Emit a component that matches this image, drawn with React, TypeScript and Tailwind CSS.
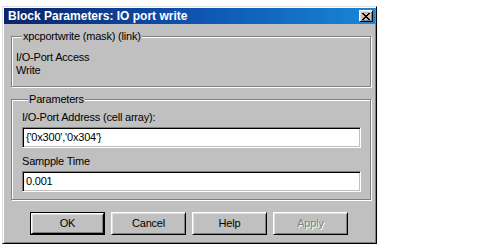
import React from 'react';

// Win2000 style bevels
const raised = "border border-t-white border-l-white border-r-black border-b-black shadow-[inset_1px_1px_#dfdfdf,inset_-1px_-1px_#808080]";
const sunken = "border border-t-[#808080] border-l-[#808080] border-r-white border-b-white shadow-[inset_1px_1px_#000,inset_-1px_-1px_#c0c0c0]";
const groupClass = "border border-[#808080] shadow-[inset_1px_1px_#fff,1px_1px_#fff] mx-0 min-w-0";
const legendClass = "ml-[6px] px-[1px] leading-[13px] bg-[#c0c0c0]";

const Button: React.FC<{ label: string; isDefault?: boolean; disabled?: boolean }> = ({ label, isDefault, disabled }) => {
  const inner = (
    <div className={`flex-1 flex items-center justify-center ${raised}`}>
      <span className={disabled ? "text-[#808080] [text-shadow:1px_1px_#fff]" : "text-black"}>{label}</span>
    </div>
  );
  return (
    <div className={`w-[75px] h-[23px] flex ${isDefault ? "border border-black" : ""}`}>
      {inner}
    </div>
  );
};

const App: React.FC = () => {
  return (
    <div className="w-[483px] h-[247px] bg-white overflow-hidden font-['Liberation_Sans',Arial,sans-serif] text-[11px] tracking-[-0.2px] text-black">
      <div className="ml-[2px] mt-[6px] w-[375px] h-[238px] bg-[#c0c0c0] p-[1px] flex flex-col border border-t-[#dfdfdf] border-l-[#dfdfdf] border-r-black border-b-black shadow-[inset_1px_1px_#fff,inset_-1px_-1px_#808080]">
        {/* title bar */}
        <div className="h-[16px] flex items-center justify-between pl-[4px] pr-[2px] bg-gradient-to-r from-[#0a246a] via-[#0e52b0] to-[#1a86d6]">
          <span className="text-white font-bold text-[12px] tracking-normal leading-none">Block Parameters: IO port write</span>
          <div className={`w-[14px] h-[12px] bg-[#c0c0c0] flex items-center justify-center ${raised}`}>
            <svg width="8" height="7" viewBox="0 0 8 7" shapeRendering="crispEdges">
              <path d="M0 0h2v1h-2zM6 0h2v1h-2zM1 1h2v1h-2zM5 1h2v1h-2zM2 2h4v1h-4zM3 3h2v1h-2zM2 4h4v1h-4zM1 5h2v1h-2zM5 5h2v1h-2zM0 6h2v1h-2zM6 6h2v1h-2z" fill="#000" />
            </svg>
          </div>
        </div>

        {/* mask description */}
        <fieldset className={`${groupClass} mt-[6px] ml-[7px] mr-[4px] h-[57px] pl-[4px] pr-[3px] pb-0`}>
          <legend className={legendClass}>xpcportwrite (mask) (link)</legend>
          <div className="pt-[8px] leading-[13px]">
            <div>I/O-Port Access</div>
            <div>Write</div>
          </div>
        </fieldset>

        {/* parameters */}
        <fieldset className={`${groupClass} mt-[6px] ml-[7px] mr-[4px] h-[107px] pl-[10px] pr-[9px] pb-0`}>
          <legend className={`${legendClass} -ml-[2px]`}>Parameters</legend>
          <div className="pt-[5px] leading-[13px]">I/O-Port Address (cell array):</div>
          <div className={`mt-[3px] h-[21px] bg-white flex items-center pl-[3px] ${sunken}`}>{"{'0x300','0x304'}"}</div>
          <div className="mt-[7px] leading-[13px]">Sampple Time</div>
          <div className={`mt-[3px] h-[21px] bg-white flex items-center pl-[3px] ${sunken}`}>0.001</div>
        </fieldset>

        {/* buttons */}
        <div className="mt-[12px] flex justify-center gap-[6px] pr-[1px]">
          <Button label="OK" isDefault />
          <Button label="Cancel" />
          <Button label="Help" />
          <Button label="Apply" disabled />
        </div>
      </div>
    </div>
  );
};

export default App;
